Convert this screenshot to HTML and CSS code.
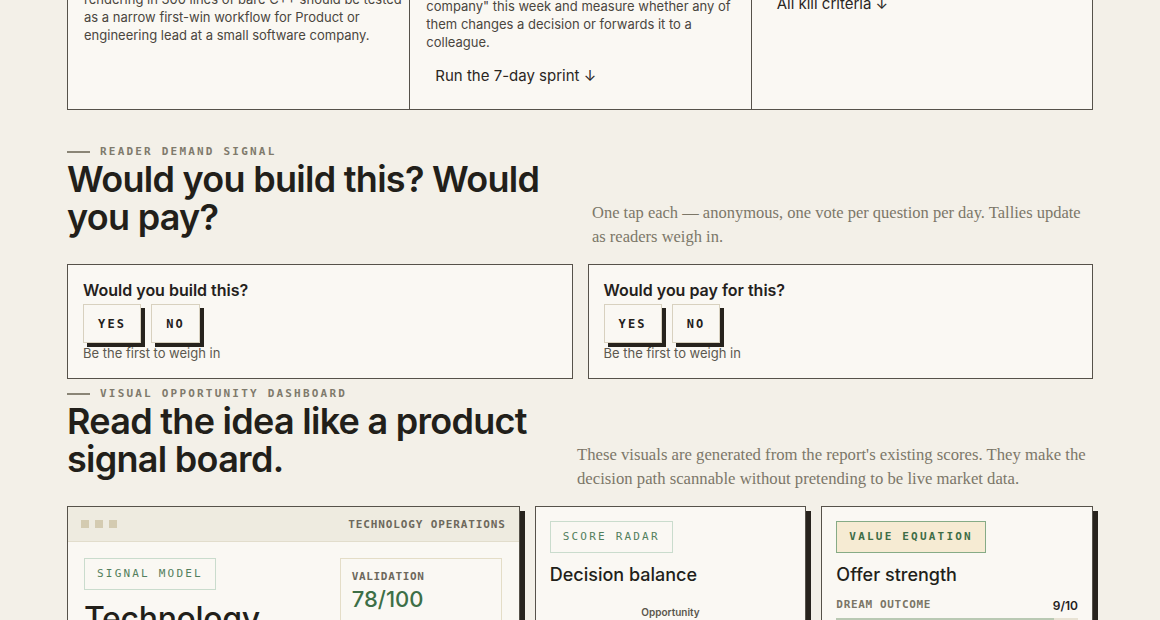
FILE: index.html
```html
<!DOCTYPE html>
<html lang="en">
<head>
<meta charset="utf-8">
<title>Idea report</title>
<link rel="stylesheet" href="styles.css">
</head>
<body>
<main class="page">
  <section class="summary">
    <div class="summary-col summary-col-lead">
      <p class="summary-kicker">THE WEDGE</p>
      <p class="summary-text">A minimal real-time graphics engine focused on rendering in 300 lines of bare C++ should be tested as a narrow first-win workflow for Product or engineering lead at a small software company.</p>
    </div>
    <div class="summary-col">
      <p class="summary-text">The fastest proof is a manual pilot: hand five teams a working render loop and a "first scene in ten minutes" guide for a "small software company" this week and measure whether any of them changes a decision or forwards it to a colleague.</p>
      <a class="summary-link" href="#sprint">Run the 7-day sprint ↓</a>
    </div>
    <div class="summary-col">
      <p class="summary-text">Stop if nobody ships a scene, nobody asks for a second feature, or nobody will pay.</p>
      <a class="summary-link" href="#kill">All kill criteria ↓</a>
    </div>
  </section>

  <section class="block block-demand">
    <div class="block-head">
      <div class="block-title">
        <p class="eyebrow">READER DEMAND SIGNAL</p>
        <h2 class="headline headline-demand">Would you build this? Would you pay?</h2>
      </div>
      <p class="lede lede-demand">One tap each — anonymous, one vote per question per day. Tallies update as readers weigh in.</p>
    </div>
    <div class="polls">
      <div class="poll">
        <h3 class="poll-q">Would you build this?</h3>
        <div class="poll-buttons">
          <button class="vote" type="button">YES</button>
          <button class="vote" type="button">NO</button>
        </div>
        <p class="poll-note">Be the first to weigh in</p>
      </div>
      <div class="poll">
        <h3 class="poll-q">Would you pay for this?</h3>
        <div class="poll-buttons">
          <button class="vote" type="button">YES</button>
          <button class="vote" type="button">NO</button>
        </div>
        <p class="poll-note">Be the first to weigh in</p>
      </div>
    </div>
  </section>

  <section class="block block-dash">
    <div class="block-head">
      <div class="block-title">
        <p class="eyebrow">VISUAL OPPORTUNITY DASHBOARD</p>
        <h2 class="headline headline-dash">Read the idea like a product signal board.</h2>
      </div>
      <p class="lede lede-dash">These visuals are generated from the report's existing scores. They make the decision path scannable without pretending to be live market data.</p>
    </div>
    <div class="dash">
      <article class="panel panel-main">
        <div class="panel-bar">
          <span class="dots"><i></i><i></i><i></i></span>
          <span class="panel-bar-label">TECHNOLOGY OPERATIONS</span>
        </div>
        <div class="panel-main-body">
          <div class="signal">
            <span class="chip">SIGNAL MODEL</span>
            <h3 class="signal-title">Technology operations</h3>
          </div>
          <div class="metric">
            <p class="metric-label">VALIDATION</p>
            <p class="metric-value">78/100</p>
          </div>
        </div>
      </article>
      <article class="panel">
        <span class="chip">SCORE RADAR</span>
        <h3 class="panel-title">Decision balance</h3>
        <svg class="radar" viewBox="0 0 241 160" width="241" height="160" aria-label="Score radar">
          <text x="120.5" y="14" text-anchor="middle" class="radar-axis">Opportunity</text>
          <polygon points="120.5,26 190,70 164,140 77,140 51,70" fill="none" stroke="#ddd6c3" stroke-width="1"/>
        </svg>
      </article>
      <article class="panel">
        <span class="chip chip-strong">VALUE EQUATION</span>
        <h3 class="panel-title">Offer strength</h3>
        <div class="factor">
          <div class="factor-row">
            <span class="factor-name">DREAM OUTCOME</span>
            <span class="factor-score">9/10</span>
          </div>
          <div class="factor-track"><div class="factor-fill" style="width:90%"></div></div>
        </div>
      </article>
    </div>
  </section>
</main>
</body>
</html>
```

FILE: styles.css
```css
* { box-sizing: border-box; }

html, body {
  margin: 0;
  background: #f3f0e8;
  color: #24211c;
  font-family: "Inter", "Liberation Sans", sans-serif;
}

body { overflow: hidden; }

.page {
  width: 1026px;
  margin: -74px auto 0; /* page is scrolled: summary card starts above the fold */
}

p, h2, h3 { margin: 0; }

/* ---------- summary card ---------- */
.summary {
  display: grid;
  grid-template-columns: repeat(3, 1fr);
  background: #faf8f3;
  border: 1px solid #56524a;
}

.summary-col {
  padding: 16px;
  display: flex;
  flex-direction: column;
  align-items: flex-start;
}

.summary-col-lead { padding-right: 4px; }

.summary-col + .summary-col { border-left: 1px solid #56524a; }

.summary-kicker {
  font-family: "DejaVu Sans Mono", monospace;
  font-size: 11px;
  line-height: 17px;
  margin-bottom: 12px;
  letter-spacing: .2em;
  color: #7a7566;
}

.summary-text {
  font-size: 13px;
  line-height: 18px;
  color: #4a463e;
}

.summary-link {
  margin-top: 8px;
  padding: 7px 9px;
  font-size: 15px;
  line-height: 20px;
  color: #2a261f;
  text-decoration: none;
}

/* ---------- section blocks ---------- */
.block-demand { margin-top: 34px; }
.block-dash { margin-top: 7px; }

.block-head {
  display: flex;
  justify-content: space-between;
  align-items: flex-end;
}

.eyebrow {
  display: flex;
  align-items: center;
  gap: 10px;
  font-family: "DejaVu Sans Mono", monospace;
  font-weight: bold;
  font-size: 11px;
  line-height: 16px;
  letter-spacing: .2em;
  color: #7f7a6c;
}

.eyebrow::before {
  content: "";
  width: 23px;
  height: 2px;
  background: #8a8576;
}

.headline {
  font-size: 36px;
  line-height: 38px;
  font-weight: 600;
  letter-spacing: -0.02em;
  color: #221f1a;
}

.headline-demand { width: 490px; }
.headline-dash { width: 480px; }

.lede {
  font-family: "Liberation Serif", serif;
  line-height: 24px;
  color: #7c7768;
  margin-bottom: -13px;
}

.lede-demand { width: 501px; font-size: 16.5px; }
.lede-dash { width: 516px; font-size: 16.7px; }

/* ---------- polls ---------- */
.polls {
  margin-top: 28px;
  display: grid;
  grid-template-columns: 1fr 1fr;
  gap: 15px;
}

.poll {
  background: #faf8f3;
  border: 1px solid #56524a;
  padding: 15px 15px 16px;
}

.poll-q {
  font-size: 16px;
  line-height: 20px;
  font-weight: 600;
  color: #24211c;
}

.poll-buttons {
  display: flex;
  gap: 10px;
  margin-top: 4px;
}

.vote {
  height: 39px;
  padding: 0 14px;
  background: #faf8f3;
  border: 1px solid #d8d1bf;
  box-shadow: 4px 4px 0 #27231d;
  font-family: "DejaVu Sans Mono", monospace;
  font-weight: bold;
  font-size: 12px;
  letter-spacing: .18em;
  color: #24211c;
  cursor: pointer;
}

.poll-note {
  margin-top: 1px;
  font-size: 13px;
  line-height: 18px;
  color: #5c584f;
}

/* ---------- dashboard ---------- */
.dash {
  margin-top: 28px;
  display: grid;
  grid-template-columns: 5fr 3fr 3fr;
  gap: 15px;
  align-items: start;
}

.panel {
  background: #faf8f3;
  border: 1px solid #56524a;
  box-shadow: 5px 5px 0 #27231d;
  padding: 14px;
  min-height: 260px;
}

.panel-main { padding: 0; }

.panel-bar {
  height: 35px;
  display: flex;
  align-items: center;
  justify-content: space-between;
  padding: 0 13px;
  background: #eeebe0;
  border-bottom: 1px solid #e2ddcc;
}

.dots { display: flex; gap: 6px; }
.dots i {
  display: block;
  width: 8px;
  height: 8px;
  background: #d4cbb1;
}

.panel-bar-label {
  font-family: "DejaVu Sans Mono", monospace;
  font-weight: bold;
  font-size: 11px;
  letter-spacing: .08em;
  color: #6d685c;
}

.panel-main-body {
  display: grid;
  grid-template-columns: 1fr 162px;
  gap: 24px;
  padding: 16px 17px 16px 16px;
}

.chip {
  display: inline-block;
  padding: 8px 12px;
  border: 1px solid #cadccd;
  font-family: "DejaVu Sans Mono", monospace;
  font-size: 11px;
  line-height: 14px;
  letter-spacing: .2em;
  color: #527f5d;
}

.chip-strong {
  background: #f6ebd3;
  border-color: #86ab86;
  color: #3e6d47;
  font-weight: bold;
}

.signal-title {
  margin-top: 10px;
  font-size: 32px;
  line-height: 38px;
  font-weight: 500;
  letter-spacing: -0.01em;
  color: #221f1a;
}

.metric {
  border: 1px solid #e4ddc7;
  padding: 10px 11px 14px;
}

.metric-label {
  font-family: "DejaVu Sans Mono", monospace;
  font-weight: bold;
  font-size: 11px;
  line-height: 16px;
  letter-spacing: .06em;
  color: #6d685c;
}

.metric-value {
  font-size: 22px;
  line-height: 28px;
  font-weight: 500;
  color: #3d6f46;
}

.panel-title {
  margin-top: 10px;
  font-size: 18px;
  line-height: 24px;
  font-weight: 500;
  color: #221f1a;
}

.radar {
  display: block;
  margin: 15px auto 0;
}

.radar-axis {
  font-family: "Inter", sans-serif;
  font-size: 10px;
  font-weight: 600;
  fill: #5a564c;
}

.factor { margin-top: 10px; }

.factor-row {
  display: flex;
  justify-content: space-between;
  align-items: center;
}

.factor-name {
  font-family: "DejaVu Sans Mono", monospace;
  font-weight: bold;
  font-size: 11px;
  line-height: 16px;
  letter-spacing: .06em;
  color: #7a7566;
}

.factor-score {
  font-size: 12px;
  font-weight: 600;
  color: #24211c;
}

.factor-track {
  margin-top: 5px;
  height: 4px;
  background: #e8e3d4;
}

.factor-fill {
  height: 100%;
  background: #b9c9b3;
}
```
